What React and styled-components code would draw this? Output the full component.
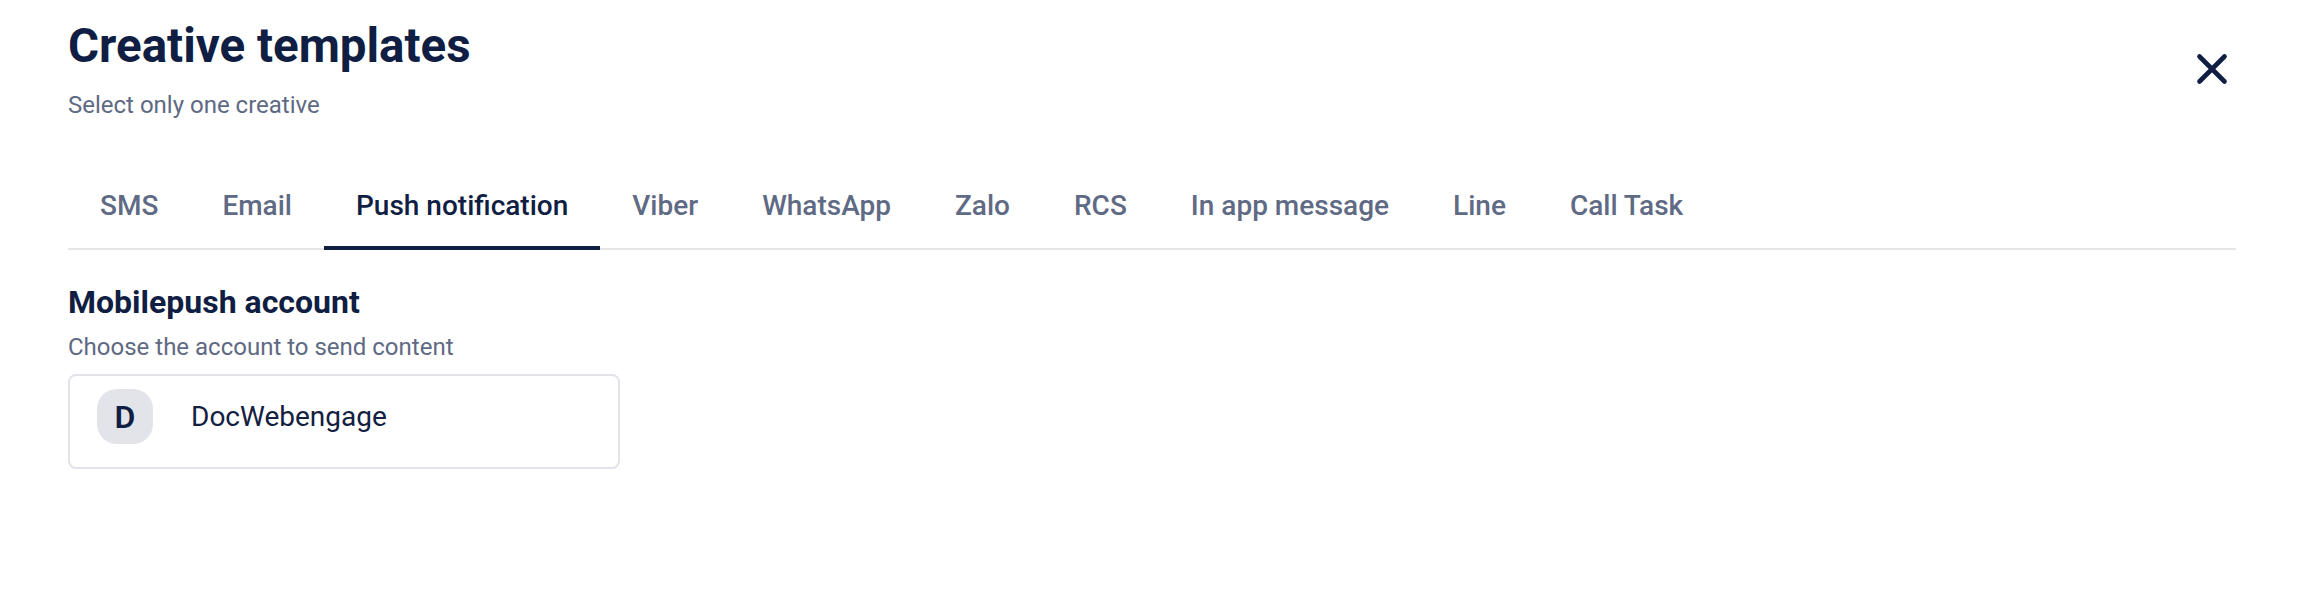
import React, { useState } from 'react';
import styled, { createGlobalStyle } from 'styled-components';

const GlobalStyle = createGlobalStyle`
  body {
    margin: 0;
    background: #ffffff;
    font-family: Roboto, "Liberation Sans", Arial, sans-serif;
    color: #0f1e42;
  }
`;

const Page = styled.div`
  padding: 0 70px 0 68px;
`;

const Header = styled.header`
  display: flex;
  justify-content: space-between;
  align-items: flex-start;
  padding-top: 18px;
`;

const Title = styled.h1`
  margin: 0;
  font-size: 47.5px;
  line-height: 56px;
  font-weight: 700;
  color: #0f1e42;
`;

const Subtitle = styled.p`
  margin: 15px 0 0;
  font-size: 24px;
  line-height: 32px;
  color: #5e6983;
`;

const CloseButton = styled.button`
  width: 48px;
  height: 48px;
  margin-top: 27px;
  padding: 0;
  border: none;
  background: transparent;
  cursor: pointer;
  display: flex;
  align-items: center;
  justify-content: center;
`;

const TabBar = styled.nav`
  display: flex;
  margin-top: 67px;
  border-bottom: 2px solid #e6e6e8;
`;

const Tab = styled.button`
  margin-bottom: -2px;
  padding: 0 32px 22px;
  border: none;
  border-bottom: 4px solid ${(p) => (p.$active ? '#0f1e42' : 'transparent')};
  background: transparent;
  font-family: inherit;
  font-size: 28px;
  line-height: 36px;
  font-weight: 500;
  color: ${(p) => (p.$active ? '#0f1e42' : '#5f6a84')};
  cursor: pointer;
  white-space: nowrap;
`;

const Section = styled.section`
  padding-top: 32px;
`;

const SectionTitle = styled.h2`
  margin: 0;
  font-size: 32px;
  line-height: 40px;
  font-weight: 700;
  color: #0f1e42;
`;

const SectionHint = styled.p`
  margin: 9px 0 0;
  font-size: 24px;
  line-height: 32px;
  color: #5e6983;
`;

const AccountCard = styled.div`
  box-sizing: border-box;
  width: 552px;
  margin-top: 11px;
  padding: 13px 27px 23px;
  border: 2px solid #e3e4e9;
  border-radius: 8px;
  display: flex;
  align-items: center;
  gap: 38px;
`;

const Avatar = styled.div`
  width: 56px;
  height: 55px;
  border-radius: 20px;
  background: #e3e4ea;
  display: flex;
  align-items: center;
  justify-content: center;
  font-size: 32px;
  font-weight: 600;
  color: #0f1e42;
`;

const AccountName = styled.span`
  font-size: 28px;
  line-height: 36px;
  color: #13203f;
`;

const tabs = [
  'SMS',
  'Email',
  'Push notification',
  'Viber',
  'WhatsApp',
  'Zalo',
  'RCS',
  'In app message',
  'Line',
  'Call Task',
];

export default function App() {
  const [active, setActive] = useState('Push notification');

  return (
    <Page>
      <GlobalStyle />
      <Header>
        <div>
          <Title>Creative templates</Title>
          <Subtitle>Select only one creative</Subtitle>
        </div>
        <CloseButton aria-label="Close">
          <svg width="48" height="48" viewBox="0 0 48 48" fill="none">
            <path
              d="M11.5 11.5 L36.5 36.5 M36.5 11.5 L11.5 36.5"
              stroke="#0f1e42"
              strokeWidth="4.6"
              strokeLinecap="round"
            />
          </svg>
        </CloseButton>
      </Header>

      <TabBar>
        {tabs.map((t) => (
          <Tab key={t} $active={t === active} onClick={() => setActive(t)}>
            {t}
          </Tab>
        ))}
      </TabBar>

      <Section>
        <SectionTitle>Mobilepush account</SectionTitle>
        <SectionHint>Choose the account to send content</SectionHint>
        <AccountCard>
          <Avatar>D</Avatar>
          <AccountName>DocWebengage</AccountName>
        </AccountCard>
      </Section>
    </Page>
  );
}
